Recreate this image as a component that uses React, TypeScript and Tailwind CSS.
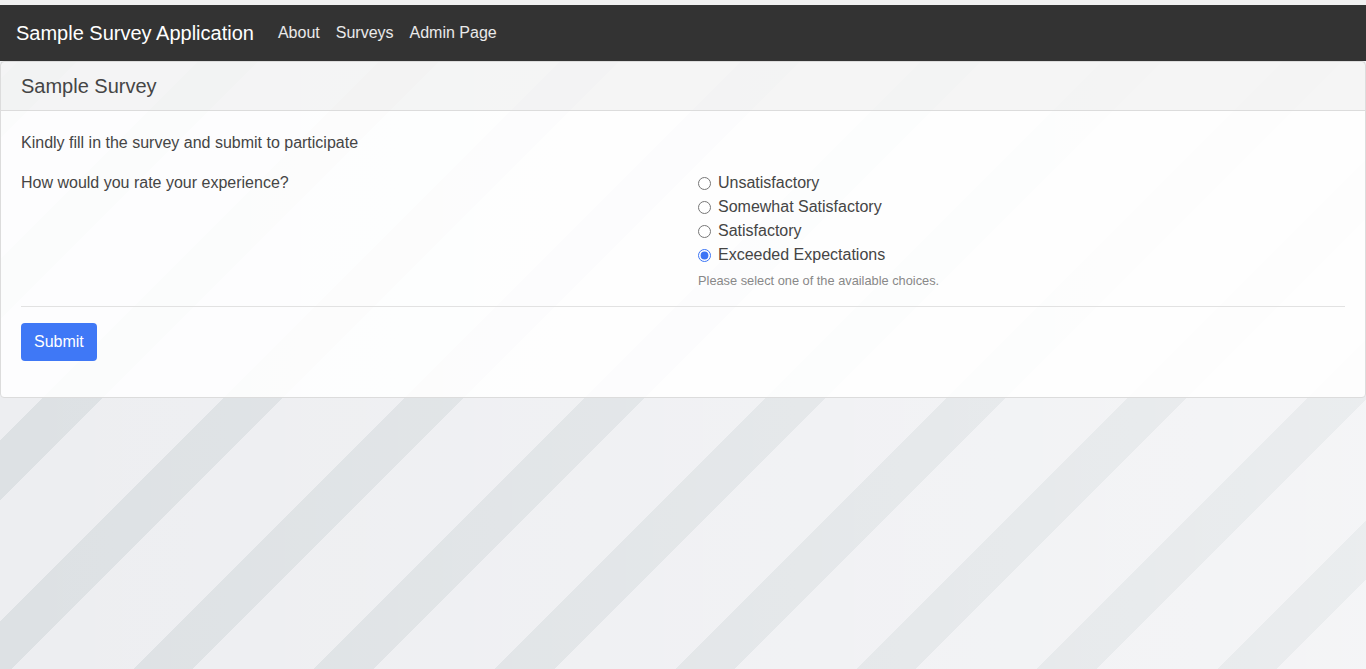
import { useState } from "react";

const choices = [
  "Unsatisfactory",
  "Somewhat Satisfactory",
  "Satisfactory",
  "Exceeded Expectations",
];

export default function App() {
  const [rating, setRating] = useState("Exceeded Expectations");

  return (
    <div className="min-h-screen font-['Liberation_Sans',Arial,sans-serif] bg-[linear-gradient(90deg,rgba(255,255,255,0)_0%,rgba(255,255,255,0.4)_100%),repeating-linear-gradient(135deg,#edeef1_0px,#edeef1_56px,#dde1e4_56px,#dde1e4_98px,#edeef1_98px,#edeef1_127.8px)]">
      <div className="h-[5px] bg-[#f1f1f1]" />

      {/* navbar */}
      <nav className="h-[56px] bg-[#333333] flex items-center px-4">
        <a href="#" className="text-[20px] leading-[30px] text-white mr-4">
          Sample Survey Application
        </a>
        <ul className="flex items-center">
          {["About", "Surveys", "Admin Page"].map((link) => (
            <li key={link}>
              <a href="#" className="px-2 text-base leading-6 text-white/90">
                {link}
              </a>
            </li>
          ))}
        </ul>
      </nav>

      {/* survey card */}
      <div className="border border-[#dcdcdc] rounded-[4px] bg-white/[0.88] text-[#454545]">
        <div className="h-[49px] flex items-center px-5 bg-black/[0.035] border-b border-[#dcdcdc]">
          <h5 className="text-[20px] leading-6">Sample Survey</h5>
        </div>
        <div className="px-5 pt-5 pb-5">
          <p className="text-base leading-6 mb-4">
            Kindly fill in the survey and submit to participate
          </p>
          <form onSubmit={(e) => e.preventDefault()}>
            <div className="grid grid-cols-2 gap-x-[30px] mb-4">
              <label className="text-base leading-6">
                How would you rate your experience?
              </label>
              <div>
                {choices.map((choice) => (
                  <label
                    key={choice}
                    className="flex items-center text-base leading-6"
                  >
                    <input
                      type="radio"
                      name="rating"
                      checked={rating === choice}
                      onChange={() => setRating(choice)}
                      className="w-[13px] h-[13px] mr-[7px] accent-[#3b74f5]"
                    />
                    {choice}
                  </label>
                ))}
                <small className="block mt-1 text-[12.8px] leading-[19px] text-[#888888]">
                  Please select one of the available choices.
                </small>
              </div>
            </div>
            <hr className="border-t border-[#e2e2e2] mb-4" />
            <div className="mb-4">
              <button
                type="submit"
                className="h-[38px] px-[13px] rounded-[4px] bg-[#3f78f6] text-white text-base leading-6"
              >
                Submit
              </button>
            </div>
          </form>
        </div>
      </div>
    </div>
  );
}
